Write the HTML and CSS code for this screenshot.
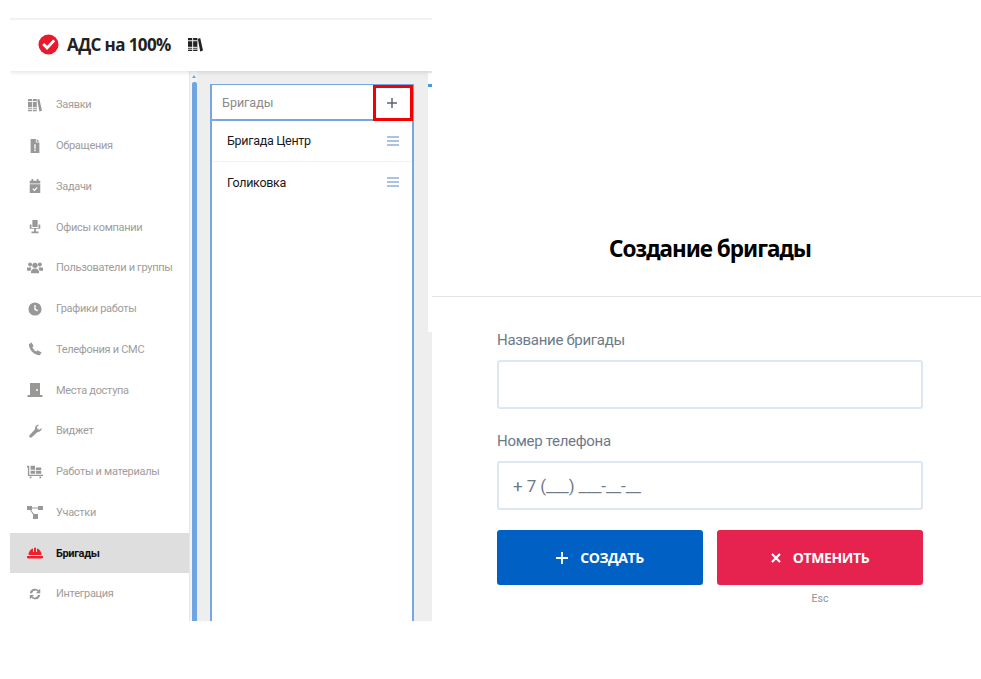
FILE: index.html
```html
<!DOCTYPE html>
<html lang="ru">
<head>
<meta charset="utf-8">
<title>Создание бригады</title>
<link rel="stylesheet" href="styles.css">
</head>
<body>
<div class="stage">
  <div class="app">
    <header class="topbar">
      <svg class="logo" viewBox="0 0 22 22"><circle cx="11" cy="11" r="10.5" fill="#e8192c"/><path d="M5.5 10.5l4 4.2 7.5-8" fill="none" stroke="#fff" stroke-width="3"/></svg>
      <span class="brand">АДС на 100%</span>
      <svg class="books" viewBox="0 0 16 16"><path fill="#222" d="M0 1h4.500v14H0zM5.500 1H10v14H5.500zM10.500 2l2.500-1 3 13.500-3 1z"/><path stroke="#fff" stroke-width="1" d="M0 4h10M0 11h10M0 13h10"/></svg>
    </header>
    <div class="workspace">
      <nav class="sidebar">
        <a class="item"><svg class="ic" viewBox="0 0 16 16"><path d="M0 1h4.500v14H0zM5.500 1H10v14H5.500zM10.500 2l2.500-1 3 13.500-3 1z"/><path stroke="#fff" d="M0 4h10M0 11h10M0 13h10"/></svg><span>Заявки</span></a>
        <a class="item"><svg class="ic" viewBox="0 0 16 16"><path d="M3 0h6v4h4v12H3zM10 0l3 3h-3z"/><path stroke="#fff" stroke-width="1.500" d="M8 6v5M8 12v2"/></svg><span>Обращения</span></a>
        <a class="item"><svg class="ic" viewBox="0 0 16 16"><path d="M2 2h2V0h2v2h4V0h2v2h2v3H2zM2 6h12v10H2z"/><path fill="none" stroke="#fff" stroke-width="1.400" d="M5.500 11l2 2 3-3.500"/></svg><span>Задачи</span></a>
        <a class="item"><svg class="ic" viewBox="0 0 16 16"><path d="M5 0h6v8H5zM2 5h2v4h8V5h2v5H2zM7 10h2v3h3v2H4v-2h3z"/></svg><span>Офисы компании</span></a>
        <a class="item"><svg class="ic wide" viewBox="0 0 18 14"><circle cx="3.500" cy="3" r="2.200"/><circle cx="14.500" cy="3" r="2.200"/><circle cx="9" cy="4" r="3"/><path d="M0 6.500h5L4 10H0zM13 6.500h5V10h-4zM4.500 13v-2c0-2 2-3.500 4.500-3.500s4.500 1.500 4.500 3.500v2z"/></svg><span>Пользователи и группы</span></a>
        <a class="item"><svg class="ic" viewBox="0 0 16 16"><circle cx="8" cy="8" r="7.500"/><path fill="none" stroke="#fff" stroke-width="1.600" d="M8 3.500V8.500l3 1.500"/></svg><span>Графики работы</span></a>
        <a class="item"><svg class="ic" viewBox="0 0 16 16"><path d="M1 2.500L4 .5l2.500 4L5 6c.8 2 2.500 3.800 4.500 4.800l1.500-1.500 4.500 2.700-2 3c-6.500 0-12.500-6-12.500-12.500z"/></svg><span>Телефония и СМС</span></a>
        <a class="item"><svg class="ic wide" viewBox="0 0 16 14"><path d="M3 0h10v12h2.500v2H.5v-2H3z"/><circle cx="10" cy="7" r="1" fill="#fff"/></svg><span>Места доступа</span></a>
        <a class="item"><svg class="ic" viewBox="0 0 16 16"><path d="M15.500 4.500c.5 2.500-1.500 5-4.500 4.500L4 15.500c-1 1-3.500-1-2.500-2.500L8 6c-.5-3 2-5.500 4.500-5L10 3.500l.8 2.200 2.200.8z"/></svg><span>Виджет</span></a>
        <a class="item"><svg class="ic wide" viewBox="0 0 18 14"><path d="M0 0h2.500v10H18v1.500H1V2H0zM4 0h5v4.500H4zM4 5.500h5V9H4zM10 2h6v3h-6zM10 6h6v3h-6zM3 12h2v2H3zM14 12h2v2h-2z"/></svg><span>Работы и материалы</span></a>
        <a class="item"><svg class="ic wide" viewBox="0 0 16 14"><path d="M0 1h5v4H0zM11 1h5v4h-5zM6 9h5v5H6zM5 2.500h6v1H5zM4 5l3 4-1 .5L3 5z"/></svg><span>Участки</span></a>
        <a class="item active"><svg class="ic wide" viewBox="0 0 16 12"><path d="M1.500 8C1.500 4.500 3.500 2 6 1.500V5h1V.8h2V5h1V1.500c2.500.5 4.500 3 4.500 6.500zM0 9h16v1.500c0 .8-1 1-2 1H2c-1 0-2-.2-2-1z"/></svg><span>Бригады</span></a>
        <a class="item"><svg class="ic" viewBox="0 0 16 16"><path d="M2 7C2.500 3.500 5.500 1.500 8.500 2c1.500.2 2.500 1 3.500 1.800L14 2v5H9l2-2C9.500 3.500 6 3.700 4.500 7zM14 9c-.5 3.500-3.500 5.500-6.500 5-1.500-.2-2.500-1-3.500-1.800L2 14V9h5l-2 2c1.500 1.500 5 1.300 6.500-2z"/></svg><span>Интеграция</span></a>
      </nav>
      <div class="scrollbar"><i class="arrow"></i><i class="thumb"></i></div>
      <main class="content">
        <section class="panel">
          <div class="panel-head">
            <span class="panel-title">Бригады</span>
            <button class="add" type="button"><svg viewBox="0 0 11 11"><path d="M5.500 0v11M0 5.500h11"/></svg></button>
          </div>
          <div class="row"><span>Бригада Центр</span><svg class="menu" viewBox="0 0 12 10"><path d="M0 1h12M0 5h12M0 9h12"/></svg></div>
          <div class="row"><span>Голиковка</span><svg class="menu" viewBox="0 0 12 10"><path d="M0 1h12M0 5h12M0 9h12"/></svg></div>
        </section>
      </main>
    </div>
  </div>

  <aside class="modal">
    <i class="tick"></i>
    <h1 class="modal-title">Создание бригады</h1>
    <form class="form">
      <label class="label">Название бригады</label>
      <div class="input"></div>
      <label class="label second">Номер телефона</label>
      <div class="input"><span class="mask">+ 7 (___) ___-__-__</span></div>
      <div class="actions">
        <div class="action">
          <button class="btn blue" type="button"><svg viewBox="0 0 12 12"><path d="M6 0v12M0 6h12"/></svg>СОЗДАТЬ</button>
        </div>
        <div class="action">
          <button class="btn red" type="button"><svg class="x" viewBox="0 0 10 10"><path d="M1 1l8 8M9 1l-8 8"/></svg>ОТМЕНИТЬ</button>
          <span class="esc">Esc</span>
        </div>
      </div>
    </form>
  </aside>
</div>
</body>
</html>
```

FILE: styles.css
```css
* { box-sizing: border-box; }
html, body { margin: 0; background: #fff; }
body { font-family: Roboto, "Open Sans", sans-serif; }

.stage { position: relative; width: 981px; height: 679px; overflow: hidden; padding: 18px 0 0 10px; }

.app { width: 422px; height: 603px; border-top: 2px solid #f2f2f2; display: flex; flex-direction: column; overflow: hidden; }
.topbar { height: 51px; flex: none; display: flex; align-items: center; padding: 0 0 2px 28px; background: #fff; box-shadow: 0 1px 5px rgba(0,0,0,.13); position: relative; z-index: 1; }
.logo { width: 21px; height: 21px; margin-right: 8px; }
.brand { font-family: "Open Sans", sans-serif; font-size: 17px; font-weight: 700; color: #222; letter-spacing: -.6px; }
.books { width: 15px; height: 15px; margin-left: 17px; }

.workspace { flex: 1; display: flex; min-height: 0; }
.sidebar { width: 179px; flex: none; padding-top: 13.400px; background: #fff; display: flex; flex-direction: column; }
.item { height: 40.750px; flex: none; display: flex; align-items: center; padding-left: 17px; font-size: 11px; letter-spacing: -.3px; color: #a09c9c; }
.item span { margin-left: 13px; }
.ic { width: 14px; height: 14px; fill: #9a9797; stroke: none; flex: none; margin: 0 1px; }
.ic.wide { width: 16px; margin: 0; }
.item.active { background: #dedede; color: #111; font-weight: 700; }
.item.active .ic { fill: #f01f2e; }

.scrollbar { width: 8px; flex: none; background: #f4f4f4; position: relative; padding: 11px 2px 0 2px; border-left: 1px solid #e4e8e4; }
.arrow { position: absolute; left: 2px; top: 4px; border: 2.500px solid transparent; border-top: 0; border-bottom: 3px solid #6fa5e2; }
.thumb { display: block; height: 100%; width: 5px; background: #6fa5e2; border-radius: 2px 2px 0 0; }

.content { flex: 1; background: #eee; padding: 13px 0 0 13px; }
.panel { width: 204px; height: 100%; background: #fff; border: 2px solid #76a7e3; border-width: 1px 2px 0 2px; }
.panel-head { height: 35.500px; display: flex; justify-content: space-between; align-items: flex-start; border-bottom: 2px solid #76a7e3; padding-left: 10px; margin-right: -1px; }
.panel-title { font-size: 12.500px; line-height: 36px; color: #8a8a8a; }
.add { width: 40px; height: 36px; background: #fff; border: 3px solid #f50000; padding: 0 2px 0 0; display: flex; align-items: center; justify-content: center; }
.add svg { width: 10px; height: 10px; fill: none; stroke: #5c6670; stroke-width: 1.600; }
.row { height: 41px; display: flex; justify-content: space-between; align-items: center; padding: 0 13px 0 15px; border-bottom: 1px solid #f2f2f2; font-size: 12.500px; letter-spacing: -.3px; color: #1a1a1a; }
.row:last-child { border-bottom: 0; }
.menu { width: 12px; height: 10px; fill: none; stroke: #8fb0dd; stroke-width: 1.300; }

.modal { position: absolute; left: 432px; top: 0; width: 549px; height: 621px; background: #fff; }
.modal::before { content: ""; position: absolute; left: -4px; top: 73px; width: 4px; height: 259px; background: #fff; }
.tick { position: absolute; left: -4px; top: 84px; width: 4px; height: 3px; background: #3f9fdc; }
.modal-title { margin: 0; height: 297px; padding: 232px 0 0 7px; border-bottom: 1px solid #e3e3e3; text-align: center; font-size: 22.500px; line-height: 34px; font-weight: 700; color: #000; letter-spacing: -1px; font-family: "Noto Sans", sans-serif; }
.form { padding: 30px 58px 0 65px; display: flex; flex-direction: column; }
.label { font-size: 15px; letter-spacing: -.3px; line-height: 26px; height: 33px; color: #6d7a88; }
.label.second { margin-top: 19px; height: 33px; }
.input { height: 49px; border: 2px solid #dce7f3; border-radius: 3px; display: flex; align-items: center; padding-left: 14px; margin-top: 0; }
.mask { font-size: 17px; letter-spacing: -.1px; color: #6d7a88; }
.actions { display: grid; grid-template-columns: 206px 206px; column-gap: 14px; margin-top: 20px; }
.action { display: flex; flex-direction: column; align-items: center; }
.btn { width: 100%; height: 55px; border: 0; border-radius: 3px; color: #fff; font-family: "Open Sans", sans-serif; font-size: 14px; font-weight: 700; letter-spacing: -.4px; display: flex; align-items: center; justify-content: center; }
.btn svg { width: 12px; height: 12px; margin-right: 12px; fill: none; stroke: #fff; stroke-width: 1.800; }
.btn svg.x { width: 10px; height: 10px; stroke-width: 2.200; }
.blue { background: #0060c4; }
.red { background: #e6234f; }
.esc { font-size: 10.500px; color: #8a929c; margin-top: 7px; }
```
